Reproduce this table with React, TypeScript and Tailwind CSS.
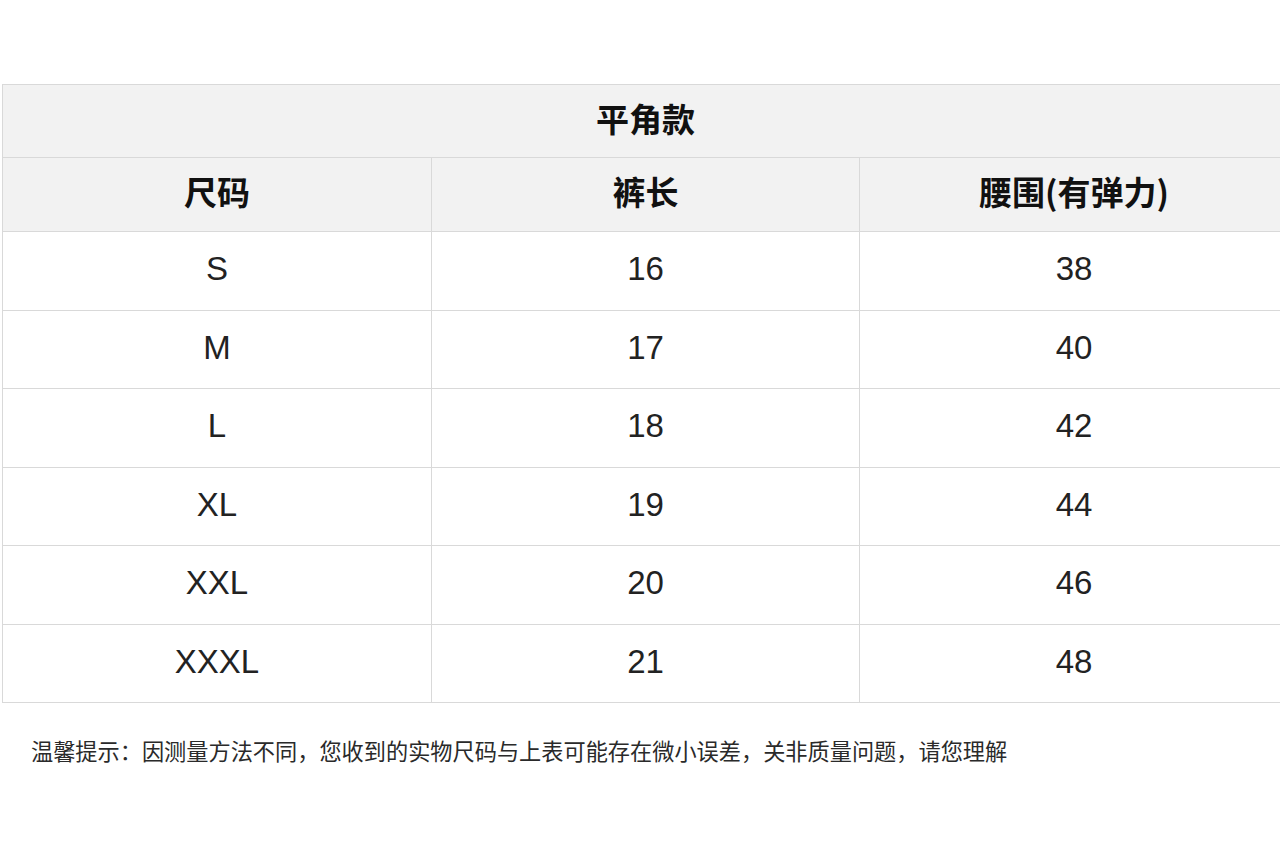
const rows = [
  { size: 'S', length: '16', waist: '38' },
  { size: 'M', length: '17', waist: '40' },
  { size: 'L', length: '18', waist: '42' },
  { size: 'XL', length: '19', waist: '44' },
  { size: 'XXL', length: '20', waist: '46' },
  { size: 'XXXL', length: '21', waist: '48' },
];

const head = 'border border-[#d9d9d9] pb-[5px] text-[33px] font-bold text-[#111] [font-family:"Noto_Sans_CJK_SC","Liberation_Sans",sans-serif]';
const cell = 'border border-[#d9d9d9] pb-[4px] text-center text-[33px] text-[#222]';

const App = () => {
  return (
    <div
      className="w-[1280px] h-[845px] overflow-hidden bg-white text-[#1a1a1a]"
      style={{ fontFamily: '"Liberation Sans", "Noto Sans CJK SC", sans-serif' }}
    >
      <div className="pt-[84px] pl-[2px]">
        <table className="w-[1286px] table-fixed border-collapse">
          <colgroup>
            <col className="w-[429px]" />
            <col className="w-[428px]" />
            <col className="w-[429px]" />
          </colgroup>
          <thead>
            <tr className="h-[73px] bg-[#f2f2f2]">
              <th colSpan={3} className={head}>
                平角款
              </th>
            </tr>
            <tr className="h-[74px] bg-[#f2f2f2]">
              <th className={head}>尺码</th>
              <th className={head}>裤长</th>
              <th className={head}>腰围(有弹力)</th>
            </tr>
          </thead>
          <tbody>
            {rows.map((r) => (
              <tr key={r.size} className="h-[78.5px]">
                <td className={cell}>{r.size}</td>
                <td className={cell}>{r.length}</td>
                <td className={cell}>{r.waist}</td>
              </tr>
            ))}
          </tbody>
        </table>
      </div>

      <p className="mt-[35px] pl-[31px] text-[22.2px] leading-[30px] text-[#2a2a2a]">
        温馨提示：因测量方法不同，您收到的实物尺码与上表可能存在微小误差，关非质量问题，请您理解
      </p>
    </div>
  );
};

export default App;
